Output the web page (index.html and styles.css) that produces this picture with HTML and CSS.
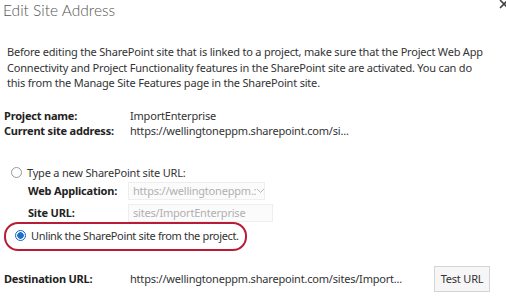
FILE: index.html
```html
<!DOCTYPE html>
<html>
<head>
<meta charset="utf-8">
<link rel="stylesheet" href="styles.css">
</head>
<body>
<div class="dialog">
  <div class="header">
    <h1 class="title">Edit Site Address</h1>
    <svg class="close" width="10" height="10" viewBox="0 0 10 10"><path d="M1 1 L9 9 M9 1 L1 9" stroke="#444" stroke-width="1.6" fill="none"/></svg>
  </div>
  <p class="intro">Before editing the SharePoint site that is linked to a project, make sure that the Project Web App Connectivity and Project Functionality features in the SharePoint site are activated. You can do this from the Manage Site Features page in the SharePoint site.</p>
  <div class="info">
    <span class="label">Project name:</span><span class="value">ImportEnterprise</span>
    <span class="label">Current site address:</span><span class="value">https://wellingtoneppm.sharepoint.com/si...</span>
  </div>
  <div class="options">
    <label class="radio-row"><span class="radio"></span><span>Type a new SharePoint site URL:</span></label>
    <div class="sub">
      <span class="label">Web Application:</span>
      <span class="select"><span class="select-text">https://wellingtoneppm.:</span><svg class="chev" width="9" height="6" viewBox="0 0 9 6"><path d="M1 1 L4.5 4.5 L8 1" fill="none" stroke="#b8b8b8" stroke-width="1"/></svg></span>
      <span class="label">Site URL:</span>
      <span class="input">sites/ImportEnterprise</span>
    </div>
    <label class="radio-row unlink"><span class="radio checked"></span><span class="unlink-text">Unlink the SharePoint site from the project.</span></label>
  </div>
  <div class="dest">
    <span class="label">Destination URL:</span>
    <span class="value dest-value">https://wellingtoneppm.sharepoint.com/sites/Import...</span>
    <button class="btn">Test URL</button>
  </div>
</div>
</body>
</html>
```
FILE: styles.css
```css
html, body {
  margin: 0;
  background: #fff;
}
body {
  font-family: "Noto Sans", "Open Sans", sans-serif;
  font-size: 11px;
  letter-spacing: -0.2px;
  color: #333;
  width: 506px;
  height: 305px;
  overflow: hidden;
}
.dialog {
  padding: 0 0 0 4px;
}
.header {
  display: flex;
  justify-content: space-between;
  height: 44px;
}
.title {
  margin: 0;
  font-family: "Lato", sans-serif;
  font-weight: 300;
  font-size: 15.5px;
  letter-spacing: 0;
  color: #555;
  line-height: 20px;
  margin-left: -1px;
  white-space: nowrap;
}
.close {
  margin-top: -1px;
  margin-right: -3px;
  flex: none;
}
.intro {
  margin: 0 0 17px 3px;
  line-height: 15.5px;
  width: 480px;
}
.info {
  display: grid;
  grid-template-columns: 126px auto;
  line-height: 15.5px;
  margin-bottom: 26px;
}
.label {
  font-weight: 700;
  color: #222;
  white-space: nowrap;
}
.options {
  padding-left: 4px;
}
.radio-row {
  display: flex;
  align-items: center;
  gap: 5px;
  height: 16px;
}
.radio {
  width: 11px;
  height: 11px;
  border: 1px solid #999;
  border-radius: 50%;
  box-sizing: border-box;
  margin-left: 3px;
  background: #fff;
  flex: none;
}
.radio.checked {
  border-color: #0a64c8;
  background: radial-gradient(circle, #1a6fd0 0 3px, #fff 3.5px);
}
.sub {
  display: grid;
  grid-template-columns: 100px auto;
  row-gap: 4px;
  align-items: center;
  padding-left: 20px;
  margin-top: 1px;
}
.select, .input {
  display: flex;
  align-items: center;
  height: 18px;
  border: 1px solid #eee;
  background: #fbfbfb;
  color: #b0b0b0;
  padding: 0 4px;
  box-sizing: border-box;
  white-space: nowrap;
  overflow: hidden;
}
.select {
  width: 137px;
  justify-content: space-between;
}
.input {
  width: 145px;
}
.chev {
  flex: none;
}
.unlink {
  position: relative;
  margin-top: 3px;
  margin-left: 4px;
  height: 22px;
}
.unlink-text {
  letter-spacing: -0.35px;
}
.unlink::before {
  content: "";
  position: absolute;
  left: -8px;
  top: -3px;
  width: 239px;
  height: 25px;
  border: 2px solid #b81c36;
  border-radius: 14px;
}
.dest {
  display: flex;
  align-items: center;
  margin-top: 19px;
}
.dest .label {
  width: 126px;
}
.dest-value {
  flex: 1;
}
.btn {
  font-family: inherit;
  font-size: 11px;
  letter-spacing: -0.2px;
  color: #333;
  background: #f6f6f6;
  border: 1px solid #d4d4d4;
  width: 56px;
  height: 26px;
  margin-right: 16px;
  padding: 0;
}
```
